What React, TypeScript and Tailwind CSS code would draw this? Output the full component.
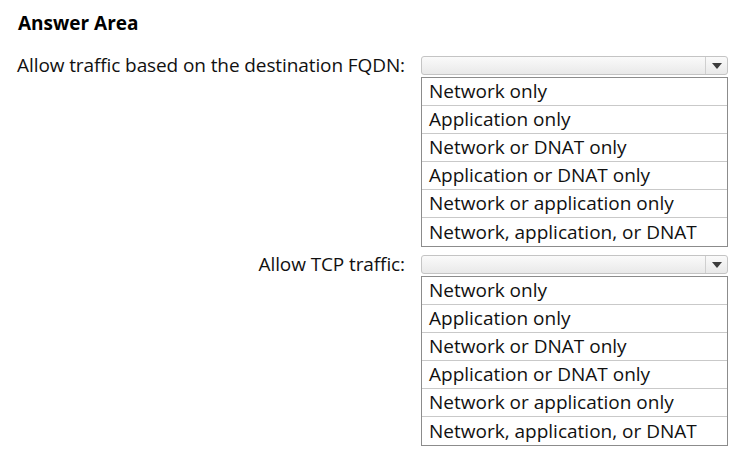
import React from 'react';

const OPTIONS = [
  'Network only',
  'Application only',
  'Network or DNAT only',
  'Application or DNAT only',
  'Network or application only',
  'Network, application, or DNAT',
];

const Select: React.FC = () => (
  <div className="flex h-[19px] w-[307px] rounded-[3px] border border-[#c4c4c4] bg-gradient-to-b from-[#fafafa] to-[#e9e9e9]">
    <div className="flex-1" />
    <div className="flex w-[22px] items-center justify-center border-l border-[#cfcfcf]">
      <svg width="10" height="6" viewBox="0 0 10 6">
        <path d="M0 0 H10 L5 6 Z" fill="#3c3c3c" />
      </svg>
    </div>
  </div>
);

const OptionList: React.FC = () => (
  <div className="mt-[2px] w-[307px] border border-[#8c8c8c] bg-white">
    {OPTIONS.map((opt, i) => (
      <div
        key={opt}
        className={`flex h-[28px] items-center pl-[7px] text-[19px] leading-none text-[#111] ${
          i < OPTIONS.length - 1 ? 'border-b border-[#c9c9c9]' : ''
        }`}
      >
        {opt}
      </div>
    ))}
  </div>
);

const Question: React.FC<{ label: string }> = ({ label }) => (
  <>
    <div className="flex h-[19px] items-center justify-end whitespace-nowrap text-[19px] leading-none tracking-[-0.1px] text-[#111]">
      {label}
    </div>
    <div className="flex flex-col">
      <Select />
      <OptionList />
    </div>
  </>
);

export default function App() {
  return (
    <div className="min-h-screen bg-white px-[18px] pt-[12px] font-['Open_Sans',sans-serif]">
      <h1 className="text-[19px] font-bold leading-[22px] text-black">Answer Area</h1>
      <div className="mt-[22px] grid grid-cols-[387px_307px] gap-x-[16px] gap-y-[8px]">
        <Question label="Allow traffic based on the destination FQDN:" />
        <Question label="Allow TCP traffic:" />
      </div>
    </div>
  );
}
